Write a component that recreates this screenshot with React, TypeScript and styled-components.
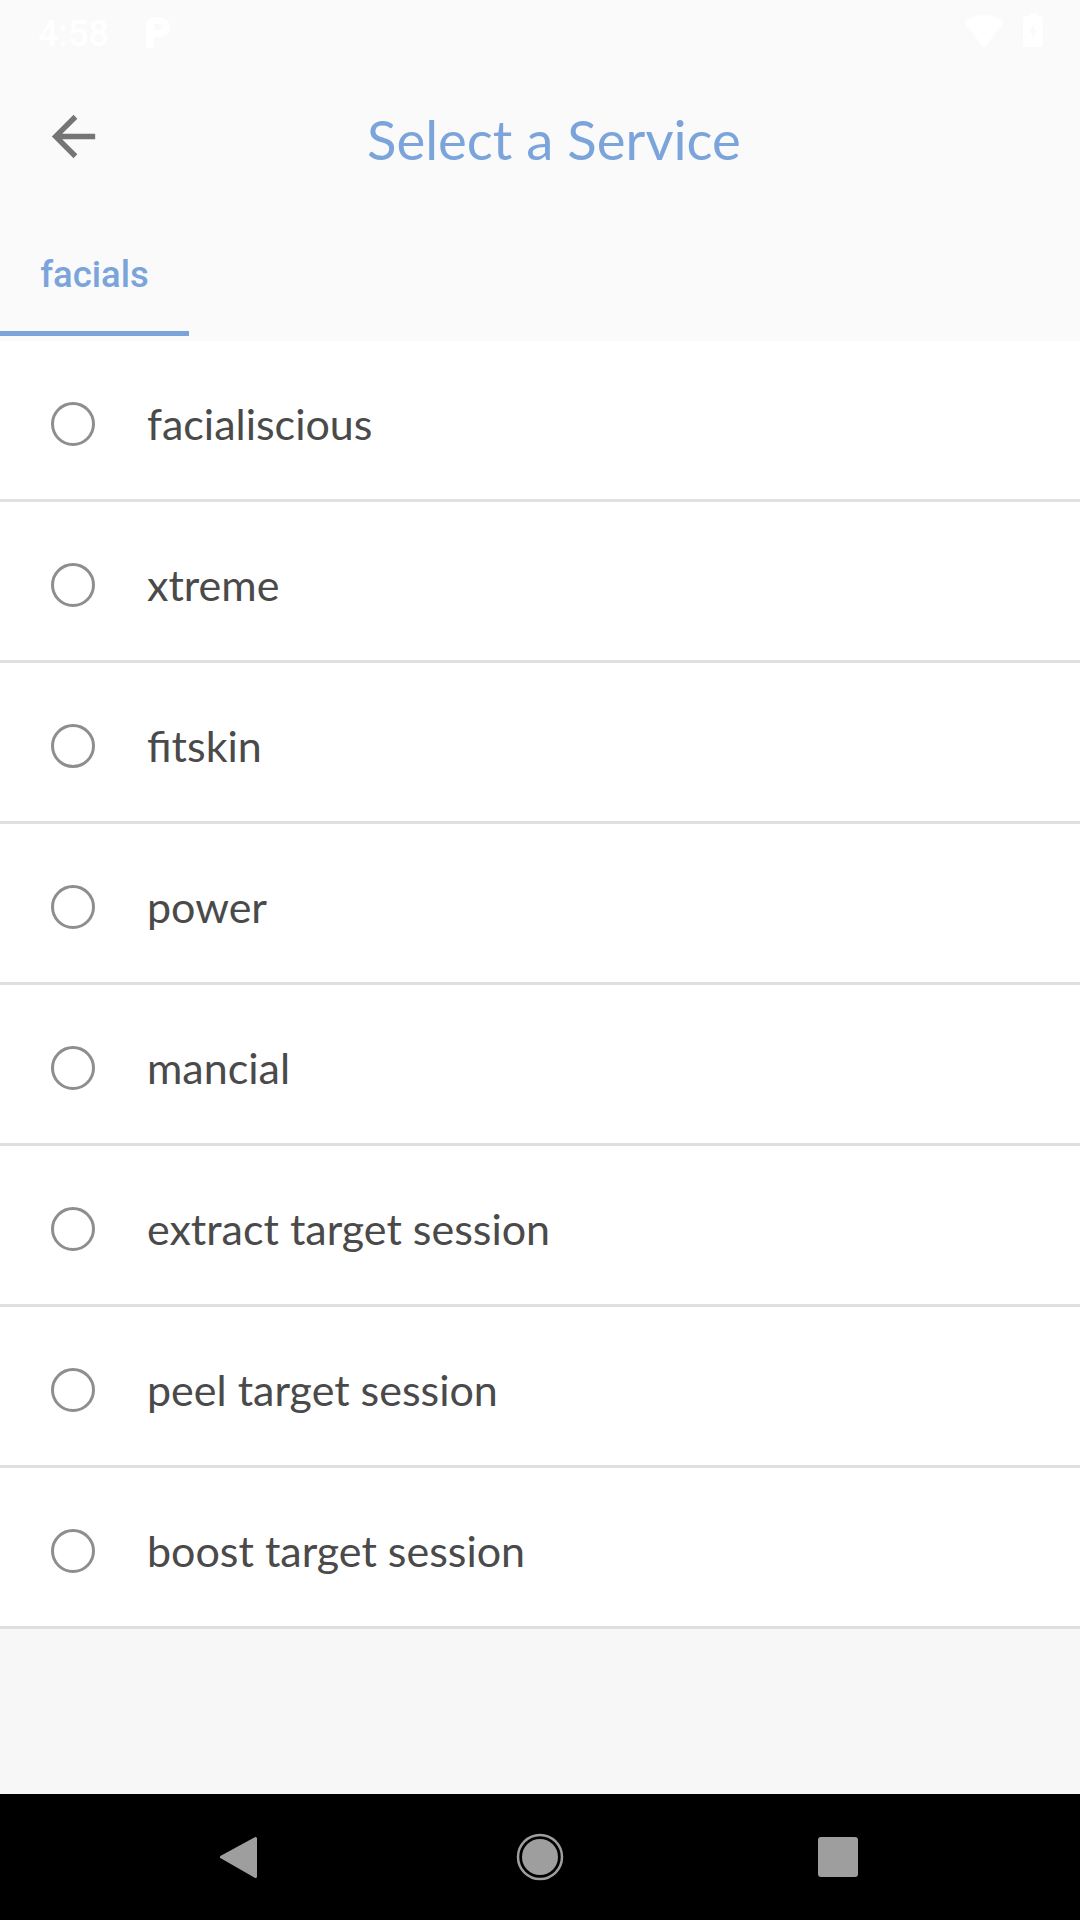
import React from "react";
import styled, { createGlobalStyle } from "styled-components";

const Global = createGlobalStyle`
  html, body { margin: 0; padding: 0; background: #f7f7f7; }
  * { box-sizing: border-box; }
`;

const Screen = styled.div`
  width: 1080px;
  height: 1920px;
  display: flex;
  flex-direction: column;
  overflow: hidden;
  background: #f7f7f7;
  font-family: "Lato", "Liberation Sans", sans-serif;
`;

const StatusBar = styled.div`
  height: 63px;
  flex: none;
  display: flex;
  align-items: flex-start;
  justify-content: space-between;
  padding: 13px 37px 0 38px;
  background: #fafafa;
  color: #ffffff;
`;

const StatusGroup = styled.div<{ $gap: number }>`
  display: flex;
  align-items: flex-start;
  gap: ${(p) => p.$gap}px;
`;

const Clock = styled.span`
  font-family: "Roboto", sans-serif;
  font-weight: 500;
  font-size: 36px;
  line-height: 42px;
`;

const Toolbar = styled.header`
  height: 147px;
  flex: none;
  display: flex;
  align-items: center;
  background: #fafafa;
  padding: 0 0 0 41px;
`;

const BackButton = styled.div`
  width: 65px;
  height: 65px;
  flex: none;
`;

const Title = styled.h1`
  margin: 4px 0 0 261px;
  font-weight: 400;
  font-size: 54.5px;
  line-height: 64px;
  color: #7ba4db;
  white-space: nowrap;
`;

const TabBar = styled.nav`
  height: 131px;
  flex: none;
  background: #fafafa;
  padding-bottom: 5px;
  display: flex;
`;

const Tab = styled.div`
  width: 189px;
  display: flex;
  align-items: center;
  justify-content: center;
  padding-top: 8px;
  border-bottom: 5px solid #7ba4db;
  font-family: "Roboto", sans-serif;
  font-weight: 500;
  font-size: 36.5px;
  color: #7ba4db;
`;

const List = styled.ul`
  margin: 0;
  padding: 0;
  list-style: none;
  flex: none;
  background: #ffffff;
`;

const Row = styled.li`
  height: 161px;
  display: flex;
  align-items: center;
  padding: 7px 0 0 51px;
  border-bottom: 3px solid #e0e0e0;
`;

const Radio = styled.span`
  width: 44px;
  height: 44px;
  flex: none;
  border-radius: 50%;
  border: 3px solid #8e8e8e;
`;

const Label = styled.span`
  margin-left: 52px;
  font-size: 43px;
  line-height: 50px;
  color: #4a4a4a;
`;

const Filler = styled.div`
  flex: 1;
`;

const NavBar = styled.div`
  height: 126px;
  flex: none;
  background: #000000;
  display: flex;
  align-items: center;
  justify-content: center;
  gap: 240px;
  padding-bottom: 1px;
`;

const NavIcon = styled.svg`
  width: 60px;
  height: 60px;
  flex: none;
`;

const items = [
  "facialiscious",
  "xtreme",
  "fitskin",
  "power",
  "mancial",
  "extract target session",
  "peel target session",
  "boost target session",
];

export default function App() {
  return (
    <Screen>
      <Global />
      <StatusBar>
        <StatusGroup $gap={37}>
          <Clock>4:58</Clock>
          <svg width="24" height="31" viewBox="0 0 24 31" style={{ marginTop: 4 }}>
            <path fill="#fff" fillRule="evenodd" d="M0 9a9 9 0 0 1 9-9h5a10 10 0 0 1 0 20H8v9a2 2 0 0 1-2 2H2a2 2 0 0 1-2-2zM8 7v6h5a3 3 0 0 0 0-6z" />
          </svg>
        </StatusGroup>
        <StatusGroup $gap={19}>
          <svg width="40" height="33" viewBox="0 0 40 33" style={{ marginTop: 2 }}>
            <path fill="#fff" d="M20 0C12 0 5 3 0 7l20 26L40 7C35 3 28 0 20 0z" />
          </svg>
          <svg width="20" height="34" viewBox="0 0 20 34">
            <path fill="#fff" fillRule="evenodd" d="M6 0h8v3h4a2 2 0 0 1 2 2v27a2 2 0 0 1-2 2H2a2 2 0 0 1-2-2V5a2 2 0 0 1 2-2h4zM11 10l-5 10h3v7l5-10h-3z" />
          </svg>
        </StatusGroup>
      </StatusBar>
      <Toolbar>
        <BackButton>
          <svg width="65" height="65" viewBox="0 0 24 24">
            <path fill="#757575" d="M20 11H7.83l5.59-5.59L12 4l-8 8 8 8 1.41-1.41L7.83 13H20v-2z" />
          </svg>
        </BackButton>
        <Title>Select a Service</Title>
      </Toolbar>
      <TabBar>
        <Tab>facials</Tab>
      </TabBar>
      <List>
        {items.map((t) => (
          <Row key={t}>
            <Radio />
            <Label>{t}</Label>
          </Row>
        ))}
      </List>
      <Filler />
      <NavBar>
        <NavIcon viewBox="0 0 60 60">
          <path fill="#9e9e9e" stroke="#9e9e9e" strokeWidth="3" strokeLinejoin="round" d="M45.5 11.5V49.5L11.5 30z" />
        </NavIcon>
        <NavIcon viewBox="0 0 60 60">
          <circle cx="30" cy="30" r="22" fill="none" stroke="#9e9e9e" strokeWidth="2.5" />
          <circle cx="30" cy="30" r="18" fill="#9e9e9e" />
        </NavIcon>
        <NavIcon viewBox="0 0 60 60">
          <rect x="8" y="10" width="40" height="40" rx="3" fill="#9e9e9e" />
        </NavIcon>
      </NavBar>
    </Screen>
  );
}
